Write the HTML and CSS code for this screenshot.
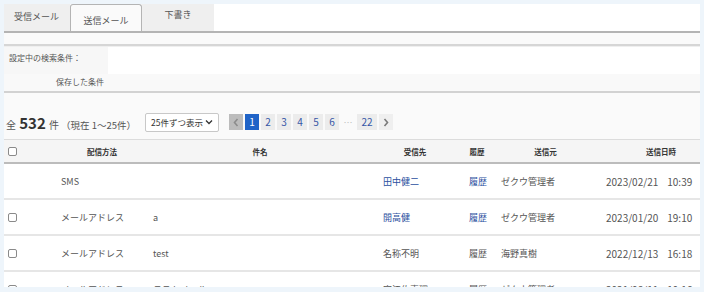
FILE: index.html
```html
<!DOCTYPE html>
<html lang="ja">
<head>
  <meta charset="UTF-8" />
  <title>送信メール</title>
  <link rel="stylesheet" href="styles.css">
</head>
<body>
  <div class="panel">
    <div class="tabs">
      <div class="tab tab-in">受信メール</div>
      <div class="tab active">送信メール</div>
      <div class="tab tab-draft">下書き</div>
    </div>
    <div class="tab-band"></div>

    <div class="search">
      <div class="search-row">
        <div class="search-label">設定中の検索条件：</div>
        <div class="search-value"></div>
      </div>
      <div class="search-row saved">
        <div class="search-label right">保存した条件</div>
        <div class="search-value"></div>
      </div>
    </div>

    <div class="toolbar">
      <div class="count">
        全 <b>532</b> 件<span class="current">（現在 1～25件）</span>
      </div>
      <div class="select">
        <span>25件ずつ表示</span>
        <svg width="8" height="6" viewBox="0 0 8 6"><path d="M1 1.5 L4 4.5 L7 1.5" fill="none" stroke="#333" stroke-width="1.3"/></svg>
      </div>
      <div class="pager">
        <span class="pg prev"><svg width="6" height="9" viewBox="0 0 6 9"><path d="M4.5 1 L1.5 4.5 L4.5 8" fill="none" stroke="#8c8c8c" stroke-width="1.6"/></svg></span>
        <span class="pg current-page">1</span>
        <span class="pg">2</span>
        <span class="pg">3</span>
        <span class="pg">4</span>
        <span class="pg">5</span>
        <span class="pg">6</span>
        <span class="dots">…</span>
        <span class="pg wide">22</span>
        <span class="pg next"><svg width="6" height="9" viewBox="0 0 6 9"><path d="M1.5 1 L4.5 4.5 L1.5 8" fill="none" stroke="#7a7a7a" stroke-width="1.6"/></svg></span>
      </div>
    </div>

    <table class="list">
      <colgroup>
        <col style="width:49px"><col style="width:92px"><col style="width:230px"><col style="width:86px"><col style="width:32px"><col style="width:105px"><col style="width:102px">
      </colgroup>
      <thead>
        <tr>
          <th class="chk"><span class="box"></span></th>
          <th class="h-method">配信方法</th>
          <th>件名</th>
          <th class="h-to">受信先</th>
          <th>履歴</th>
          <th>送信元</th>
          <th class="h-date">送信日時</th>
        </tr>
      </thead>
      <tbody>
        <tr>
          <td class="chk"></td>
          <td>SMS</td>
          <td></td>
          <td><a>田中健二</a></td>
          <td><a>履歴</a></td>
          <td>ゼクウ管理者</td>
          <td class="date">2023/02/21<span class="gap"></span>10:39</td>
        </tr>
        <tr>
          <td class="chk"><span class="box"></span></td>
          <td>メールアドレス</td>
          <td>a</td>
          <td><a>開高健</a></td>
          <td><a>履歴</a></td>
          <td>ゼクウ管理者</td>
          <td class="date">2023/01/20<span class="gap"></span>19:10</td>
        </tr>
        <tr>
          <td class="chk"><span class="box"></span></td>
          <td>メールアドレス</td>
          <td>test</td>
          <td>名称不明</td>
          <td>履歴</td>
          <td>海野真樹</td>
          <td class="date">2022/12/13<span class="gap"></span>16:18</td>
        </tr>
        <tr>
          <td class="chk"><span class="box"></span></td>
          <td>メールアドレス</td>
          <td>テストメール</td>
          <td>宇江佐真理</td>
          <td>履歴</td>
          <td>ゼクウ管理者</td>
          <td class="date">2021/08/11<span class="gap"></span>19:16</td>
        </tr>
      </tbody>
    </table>
  </div>
</body>
</html>
```

FILE: styles.css
```css
body {
  margin: 0;
  padding: 4px;
  background: #eef5fb;
  font-family: "Noto Sans CJK JP", sans-serif;
  color: #555;
  font-size: 9px;
  height: 292px;
  box-sizing: border-box;
  overflow: hidden;
}

.panel {
  width: 696px;
  background: #fafafa;
  height: 283px;
  overflow: hidden;
}

/* tabs */
.tabs {
  display: flex;
  height: 27px;
  background: #fff;
  border-bottom: 2px solid #b4b4b4;
}

.tab {
  width: 66px;
  background: #efefef;
  color: #555;
  font-size: 9px;
  line-height: 12px;
  box-sizing: border-box;
}

.tab-in {
  padding: 7px 0 0 10px;
}

.tab.active {
  width: 72px;
  background: #fafafa;
  border: 1px solid #b4b4b4;
  border-bottom: none;
  border-radius: 3px 3px 0 0;
  text-align: center;
  padding-top: 10px;
}

.tab-draft {
  width: 72px;
  text-align: center;
  padding-top: 5px;
}

.tab-band {
  height: 11px;
  background: #fafafa;
  border-bottom: 2px solid #d6d6d6;
}

/* search conditions */
.search {
  border-top: 1px solid #efefef;
  border-bottom: 2px solid #d2d2d2;
  font-size: 8px;
}

.search-row {
  display: flex;
  height: 27px;
  background: #fff;
}

.search-row.saved {
  height: 17px;
  background: #f9f9f9;
}

.search-label {
  width: 104px;
  background: #f7f7f7;
  padding-left: 5px;
  line-height: 22px;
  box-sizing: border-box;
}

.search-row.saved .search-label {
  background: #f9f9f9;
  text-align: right;
  padding: 0 4px 0 0;
  line-height: 16px;
}

.search-value {
  flex: 1;
}

/* toolbar */
.toolbar {
  display: flex;
  align-items: center;
  height: 47px;
  padding-top: 12px;
  box-sizing: border-box;
  border-bottom: 1px solid #dcdcdc;
}

.count {
  padding-left: 2px;
  font-size: 10px;
  color: #555;
  width: 139px;
  white-space: nowrap;
}

.count b {
  font-size: 15px;
  color: #333;
  margin: 0 1px;
}

.current {
  font-size: 9.5px;
  margin-left: 2px;
}

.select {
  width: 74px;
  height: 19px;
  border: 1px solid #c8c8c8;
  border-radius: 2px;
  background: #fff;
  display: flex;
  align-items: center;
  justify-content: space-between;
  padding: 0 5px 0 5px;
  box-sizing: border-box;
  font-size: 8.5px;
  color: #333;
}

.pager {
  display: flex;
  gap: 2px;
  margin-left: 10px;
  align-items: center;
}

.pg {
  width: 14px;
  height: 16px;
  line-height: 16px;
  text-align: center;
  background: #ececec;
  color: #3556a6;
  font-size: 10px;
  display: flex;
  align-items: center;
  justify-content: center;
}

.pg.wide {
  width: 20px;
}

.pg.prev {
  background: #bcbcbc;
}

.pg.next {
  background: #efefef;
}

.pg.current-page {
  background: #1f63c7;
  color: #fff;
}

.dots {
  width: 14px;
  text-align: center;
  color: #bbb;
  font-size: 9px;
}

/* table */
.list {
  width: 696px;
  border-collapse: collapse;
  table-layout: fixed;
  background: #fff;
}

.list th {
  height: 22px;
  background: #f5f5f5;
  border-bottom: 2px solid #bcbcbc;
  font-size: 7.5px;
  font-weight: bold;
  color: #333;
  text-align: center;
  padding: 0;
}

.list th.h-method {
  padding-left: 6px;
}

.list th.h-to {
  padding-right: 6px;
}

.list th.h-date {
  padding-left: 24px;
}

.list td {
  height: 34px;
  border-bottom: 2px solid #e6e6e6;
  padding: 0 0 0 8px;
  font-size: 9px;
  color: #555;
  white-space: nowrap;
}

.list .chk {
  padding: 0 0 0 4px;
  text-align: left;
}

.box {
  display: block;
  width: 7px;
  height: 7px;
  border: 1px solid #8a8a8a;
  border-radius: 2px;
  background: #fff;
}

.list a {
  color: #2b4fa0;
  text-decoration: none;
}

.list td.date {
  font-size: 10px;
}

.gap {
  display: inline-block;
  width: 9px;
}
```
